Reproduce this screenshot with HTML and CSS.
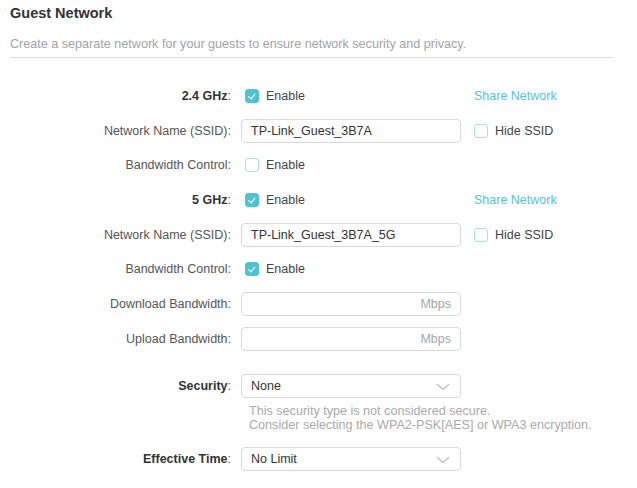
FILE: index.html
```html
<!DOCTYPE html>
<html>
<head>
<meta charset="utf-8">
<link rel="stylesheet" href="styles.css">
</head>
<body>
<div class="panel">
  <h2 class="title">Guest Network</h2>
  <p class="desc">Create a separate network for your guests to ensure network security and privacy.</p>
  <div class="divider"></div>

  <div class="form">
    <div class="row">
      <div class="label"><b>2.4 GHz</b>:</div>
      <div class="field"><span class="cb on"></span><span class="cb-text">Enable</span></div>
      <div class="extra"><a class="link">Share Network</a></div>
    </div>
    <div class="row">
      <div class="label">Network Name (SSID):</div>
      <div class="field"><div class="input">TP-Link_Guest_3B7A</div></div>
      <div class="extra"><span class="cb"></span><span class="cb-text">Hide SSID</span></div>
    </div>
    <div class="row">
      <div class="label">Bandwidth Control:</div>
      <div class="field"><span class="cb"></span><span class="cb-text">Enable</span></div>
    </div>
    <div class="row">
      <div class="label"><b>5 GHz</b>:</div>
      <div class="field"><span class="cb on"></span><span class="cb-text">Enable</span></div>
      <div class="extra"><a class="link">Share Network</a></div>
    </div>
    <div class="row">
      <div class="label">Network Name (SSID):</div>
      <div class="field"><div class="input">TP-Link_Guest_3B7A_5G</div></div>
      <div class="extra"><span class="cb"></span><span class="cb-text">Hide SSID</span></div>
    </div>
    <div class="row">
      <div class="label">Bandwidth Control:</div>
      <div class="field"><span class="cb on"></span><span class="cb-text">Enable</span></div>
    </div>
    <div class="row">
      <div class="label">Download Bandwidth:</div>
      <div class="field"><div class="input unit"><span class="suffix">Mbps</span></div></div>
    </div>
    <div class="row">
      <div class="label">Upload Bandwidth:</div>
      <div class="field"><div class="input unit"><span class="suffix">Mbps</span></div></div>
    </div>

    <div class="row row-sec">
      <div class="label"><b>Security</b>:</div>
      <div class="field"><div class="input select">None<span class="chev"><svg width="14" height="8" viewBox="0 0 14 8"><path d="M1 1.2 L7 6.5 L13 1.2" fill="none" stroke="#bdbdbd" stroke-width="1.3"/></svg></span></div></div>
    </div>
    <div class="hint">This security type is not considered secure.<br>Consider selecting the WPA2-PSK[AES] or WPA3 encryption.</div>

    <div class="row row-time">
      <div class="label"><b>Effective Time</b>:</div>
      <div class="field"><div class="input select">No Limit<span class="chev"><svg width="14" height="8" viewBox="0 0 14 8"><path d="M1 1.2 L7 6.5 L13 1.2" fill="none" stroke="#bdbdbd" stroke-width="1.3"/></svg></span></div></div>
    </div>
  </div>
</div>
</body>
</html>
```
FILE: styles.css
```css
* { box-sizing: border-box; }
html, body { margin: 0; padding: 0; background: #fff; }
body {
  font-family: "Liberation Sans", Arial, sans-serif;
  font-size: 12.5px;
  color: #555;
}
.panel {
  width: 603px;
  margin-left: 10px;
}
.title {
  margin: 0;
  padding-top: 5px;
  font-size: 14.5px;
  font-weight: bold;
  color: #333;
  line-height: 17px;
}
.desc {
  margin: 0;
  padding-top: 14px;
  line-height: 16px;
  color: #a3a3a3;
  font-size: 12.6px;
}
.divider {
  margin-top: 5px;
  height: 1px;
  background: #dcdcdc;
}
.form {
  padding-top: 26px;
  display: flex;
  flex-direction: column;
}
.row {
  display: flex;
  align-items: center;
  height: 24px;
  margin-bottom: 10.7px;
}
.label {
  width: 221px;
  text-align: right;
  color: #555;
  white-space: nowrap;
}
.label b { color: #333; font-weight: bold; }
.field {
  width: 220px;
  margin-left: 10px;
  display: flex;
  align-items: center;
}
.extra {
  margin-left: 13px;
  display: flex;
  align-items: center;
}
.cb {
  width: 14px;
  height: 14px;
  border: 1.5px solid #a9dfe6;
  border-radius: 3px;
  background: #fff;
  display: inline-block;
  position: relative;
  margin-left: 4px;
}
.extra .cb { margin-left: 0; }
.cb.on {
  background: #4fc1cf;
  border-color: #4fc1cf;
}
.cb.on::after {
  content: "";
  position: absolute;
  left: 3.5px;
  top: 2px;
  width: 3px;
  height: 5.5px;
  border-right: 1.6px solid #fff;
  border-bottom: 1.6px solid #fff;
  transform: rotate(40deg);
}
.cb-text {
  margin-left: 7px;
  color: #444;
}
.link {
  color: #5bc3cf;
  text-decoration: none;
}
.input {
  width: 220px;
  height: 24px;
  border: 1px solid #d9d9d9;
  border-radius: 4px;
  padding: 0 9px;
  display: flex;
  align-items: center;
  color: #333;
  position: relative;
}
.input.unit { justify-content: flex-end; }
.suffix { color: #a6a6a6; }
.chev {
  position: absolute;
  right: 10px;
  top: 8px;
  line-height: 0;
}
.row-sec { margin-top: 12px; margin-bottom: 0; }
.hint {
  margin-left: 239px;
  margin-top: 6px;
  line-height: 14px;
  color: #aaa;
  font-size: 12.6px;
}
.row-time { margin-top: 15px; }
```
